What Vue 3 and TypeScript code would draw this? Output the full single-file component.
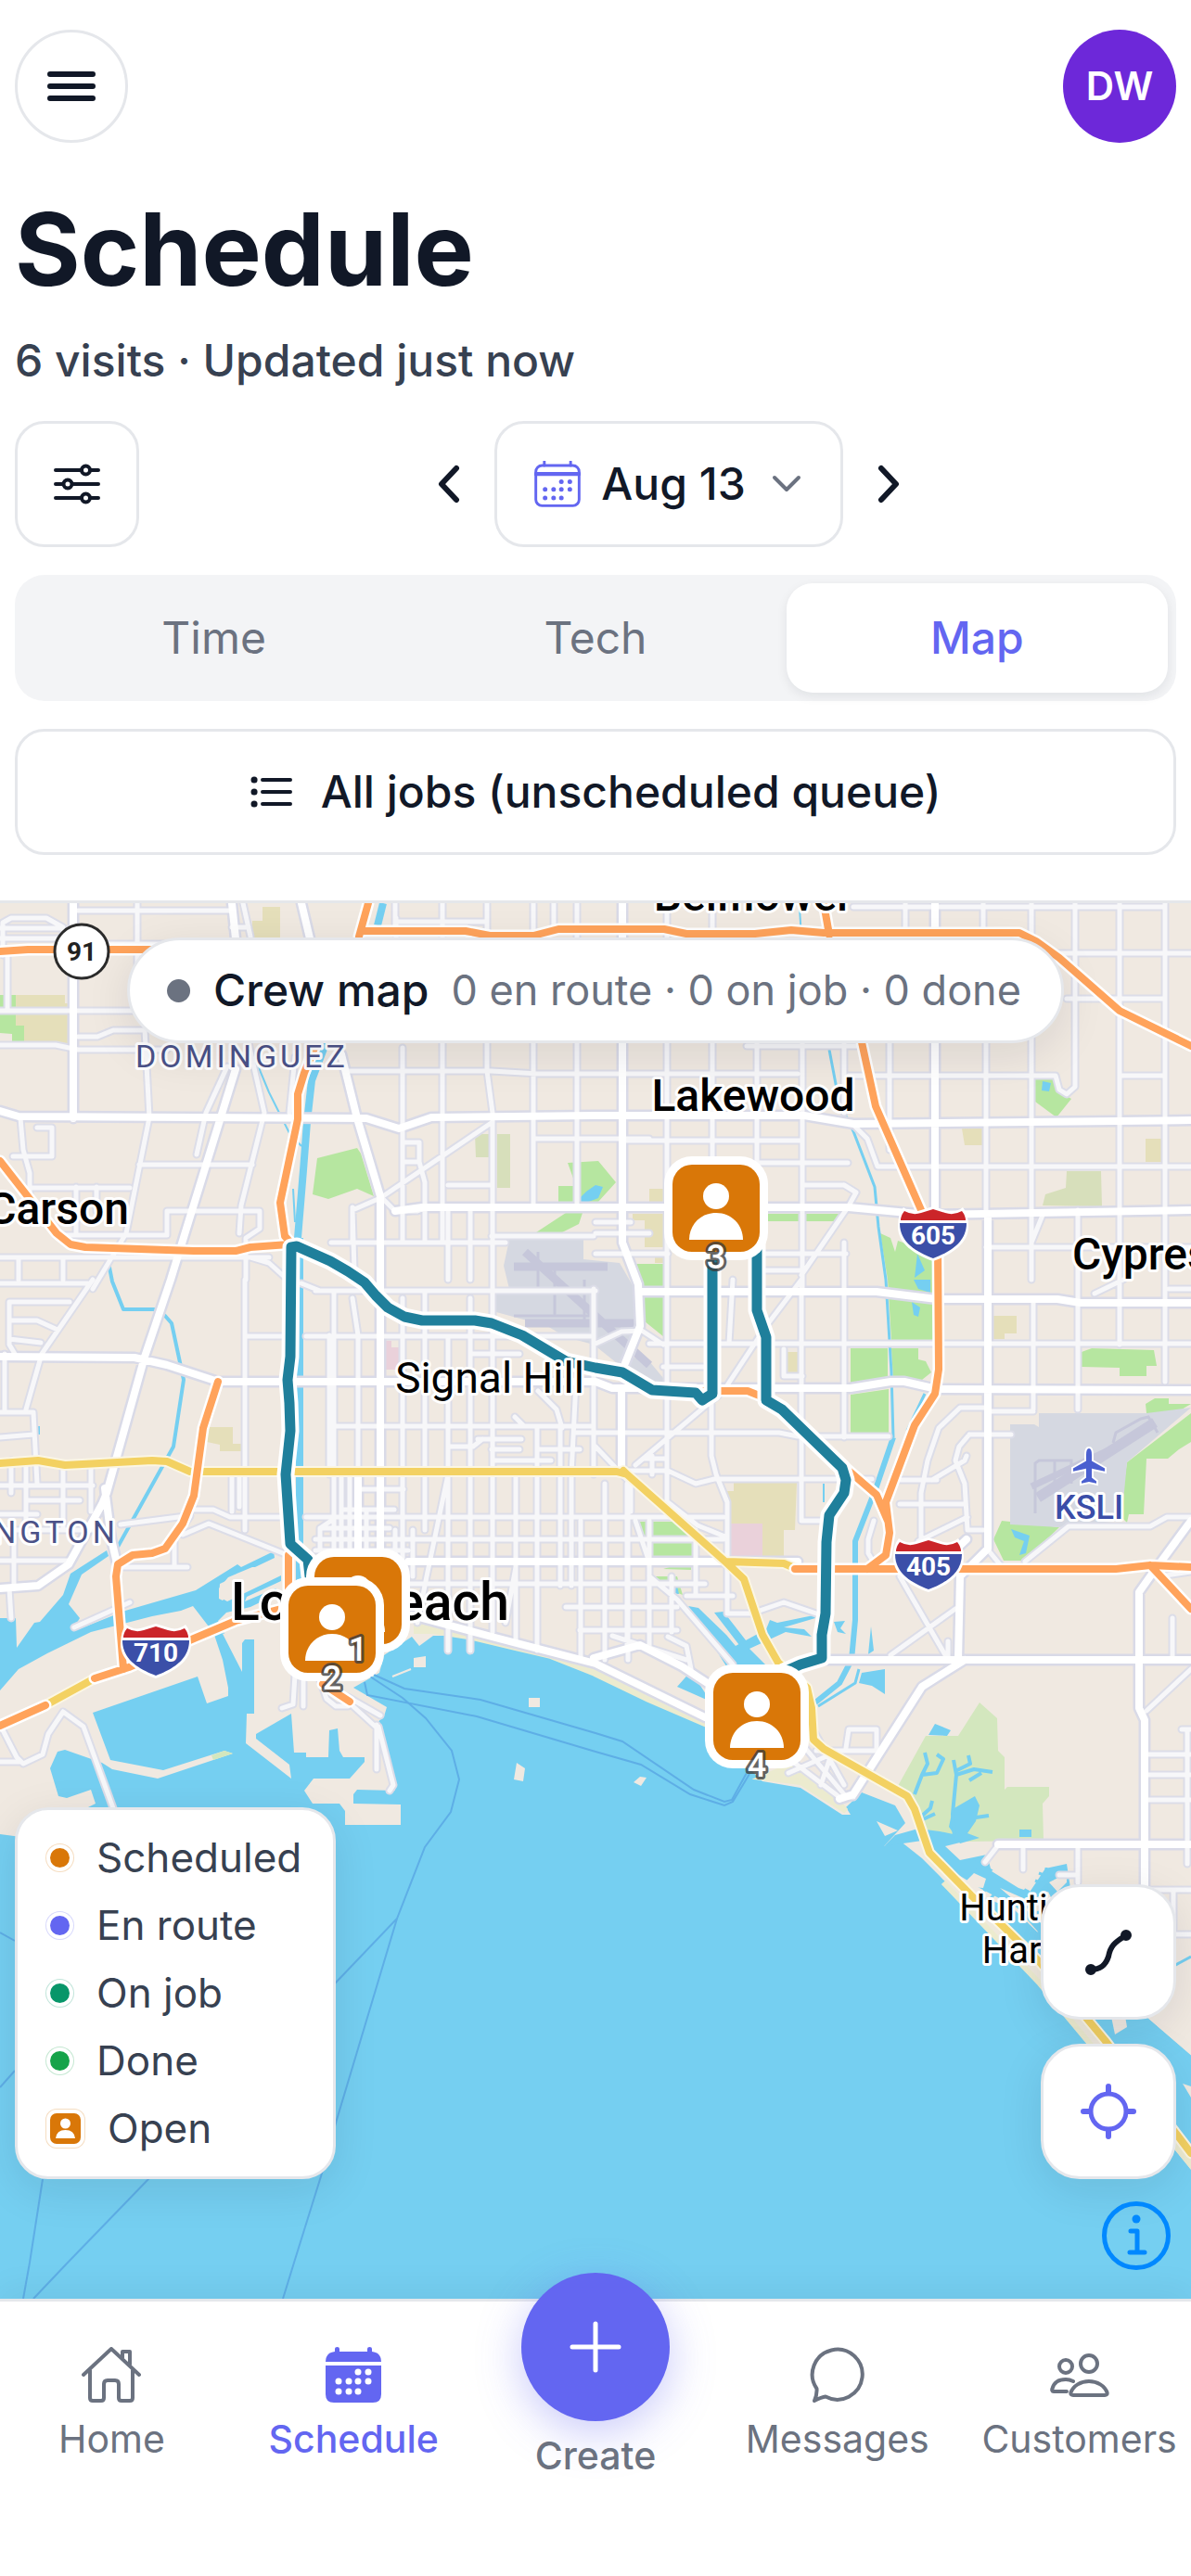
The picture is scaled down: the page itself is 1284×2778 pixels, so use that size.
<script setup lang="ts">
import { ref } from 'vue'

type View = 'Time' | 'Tech' | 'Map'
type Pair = [number, number]

const views: View[] = ['Time', 'Tech', 'Map']
const activeView = ref<View>('Map')

const legend = [
  { label: 'Scheduled', color: '#d97708' },
  { label: 'En route', color: '#6366f1' },
  { label: 'On job', color: '#079669' },
  { label: 'Done', color: '#16a34a' },
]

const calendarDots: Pair[] = [
  [35, 27], [46, 27],
  [14, 37], [25, 37], [35, 37], [46, 37],
  [14, 48], [25, 48], [35, 48],
]

// Stops are drawn in this order, so the later one lies on top.
const stops = [
  { n: 3, x: 772, y: 1303 },
  { n: 1, x: 386, y: 1726 },
  { n: 2, x: 358, y: 1757 },
  { n: 4, x: 816, y: 1851 },
]

const shields = [
  { n: '605', x: 1006, y: 1330 },
  { n: '405', x: 1001, y: 1687 },
  { n: '710', x: 168, y: 1780 },
]

const v = (x: number, a: number, b: number) => `M${x} ${a}V${b}`
const h = (y: number, a: number, b: number) => `M${a} ${y}H${b}`

const minorRoads: string = [
  // north-west
  h(1001, 0, 64), h(982, 84, 250), h(1012, 0, 78), h(1090, 0, 150), v(148, 974, 1060), h(1018, 84, 212),
  'M3 1030V995L12 990H50L68 1000V1015', h(1127, 0, 60), 'M60 1127L84 1132H180', 'M84 1118H105L122 1111H156',
  'M156 1110L161 1205L136 1330L100 1390', v(8, 1030, 1090), 'M262 974L270 1010', h(1000, 250, 268),
  'M245 1150L222 1200L212 1245', 'M268 1125L285 1200L260 1300L258 1330', 'M318 1140L312 1200', h(1256, 150, 272),
  'M22 1206L25 1240L32 1265V1310', 'M40 1216H56V1247H14', h(1281, 30, 140), h(1332, 60, 180), 'M180 1332V1306H280V1325L265 1335V1380',
  h(1356, 0, 290), v(20, 1356, 1380), v(68, 1356, 1380), 'M270 1356L290 1362L310 1380', v(82, 1280, 1330), v(104, 1280, 1306),
  // north centre
  h(994, 428, 525), v(427, 990, 1010), v(477, 974, 1340), v(525, 974, 1155), 'M525 1155L531 1200V1440', v(434, 1130, 1340), v(575, 974, 1303),
  v(597, 974, 1003), v(622, 974, 1303), 'M375 1155H530L580 1158H860', h(1228, 575, 700), 'M426 974V1003', 'M531 1210L410 1292L380 1305L382 1370',
  'M410 1290L426 1306H450L460 1302', 'M434 1232H452V1253H434', 'M452 1253L458 1275V1340', h(1278, 483, 530), h(1340, 357, 545), v(380, 1302, 1340),
  v(483, 1302, 1380), v(507, 1302, 1380), h(1333, 530, 640), v(458, 1302, 1340),
  // north-east
  h(978, 920, 1256), v(671, 974, 1000), v(719, 974, 1380), v(768, 974, 1258), v(816, 1100, 1380), v(865, 1100, 1395), v(910, 1120, 1200),
  v(910, 1340, 1550), v(959, 1125, 1240), v(976, 974, 1000), v(1060, 974, 1000), v(1063, 1125, 1305), v(1112, 974, 1380), v(1159, 974, 1170),
  'M1159 1160V1172L1150 1180L1142 1175L1138 1160H915', v(1207, 974, 1450), v(1256, 974, 1490), h(1028, 1142, 1284), h(1077, 1150, 1256),
  h(1160, 1207, 1256), h(1230, 675, 865), h(1254, 816, 914), h(1278, 865, 910), 'M910 1278L923 1286L914 1302L864 1375',
  'M920 1213L935 1228L946 1258H1284', h(1345, 1063, 1284), h(1352, 820, 912), v(1162, 1305, 1520), 'M1125 1308L1112 1340', h(1370, 820, 865),
  h(1128, 805, 930), h(1330, 642, 700), h(1318, 642, 680), h(1352, 642, 720),
  // mid west
  h(1384, 0, 95), 'M100 1380L45 1460L28 1520', h(1404, 10, 75), 'M10 1404V1450L16 1460', 'M10 1424H40L62 1434', 'M10 1444L44 1448',
  h(1523, 0, 36), 'M36 1523L40 1600', 'M0 1550L36 1547', v(5, 1460, 1520), h(1602, 0, 100), h(1618, 30, 86), h(1633, 0, 40), v(68, 1584, 1650),
  v(98, 1584, 1630), v(28, 1575, 1640), v(12, 1575, 1610), h(1683, 0, 74), v(15, 1650, 1713), 'M10 1713L12 1745', h(1650, 0, 100),
  v(264, 1380, 1650), 'M130 1644L200 1635L205 1628H230L248 1636H310', 'M197 1655L225 1643L305 1675', 'M205 1635L188 1660V1690H130', h(1690, 130, 202),
  h(1441, 264, 305), v(250, 1590, 1630), v(258, 1590, 1625), 'M80 1755L140 1728',
  // long beach grid
  h(1392, 340, 642), h(1441, 330, 640), h(1538, 355, 640), 'M325 1384L345 1392H400', 'M380 1400L386 1440V1540', v(355, 1440, 1590), v(360, 1392, 1690),
  v(386, 1538, 1700), v(434, 1400, 1680), v(458, 1392, 1650), v(483, 1441, 1780), v(507, 1400, 1780), v(531, 1392, 1760), v(556, 1590, 1770),
  v(579, 1538, 1780), v(604, 1538, 1710), 'M622 1470L616 1590V1710', h(1460, 507, 560), h(1552, 515, 562), h(1563, 530, 560), h(1575, 531, 594),
  h(1636, 330, 780), h(1660, 340, 780), h(1708, 430, 760), 'M483 1590L460 1700L450 1750', 'M556 1690L545 1750', h(1606, 386, 435), h(1628, 370, 425),
  'M483 1560H510L520 1552', 'M555 1528L565 1538H620', 'M580 1500L600 1520L606 1540', h(1545, 620, 660), h(1733, 610, 730), v(626, 1640, 1790),
  v(652, 1600, 1790), v(676, 1600, 1780), v(700, 1640, 1770), v(724, 1700, 1760), h(1758, 625, 730), h(1563, 580, 625), v(640, 1390, 1590),
  'M345 1670V1648L360 1638', v(368, 1590, 1680), v(377, 1590, 1680), v(395, 1630, 1690),
  h(1648, 345, 420), h(1672, 340, 440), v(426, 1650, 1700), v(445, 1650, 1700),
  // middle
  v(719, 1380, 1620), h(1393, 690, 950), h(1449, 700, 1284), 'M640 1450L670 1436L692 1435L715 1450', 'M790 1380L786 1449', 'M864 1380L826 1430L780 1500L685 1580',
  'M767 1500V1570L772 1590L784 1620V1740', h(1545, 642, 840), 'M840 1545L860 1549H958', v(864, 1380, 1640), 'M845 1455V1484H865', 'M676 1586H720L750 1600L770 1595H940',
  'M642 1560L680 1600V1630', v(677, 1610, 1790), 'M720 1620L752 1645L784 1658', 'M864 1640H885', h(1474, 715, 765), 'M685 1640L700 1685V1780', h(1721, 740, 790),
  v(750, 1650, 1720), 'M785 1740H810L845 1728L880 1740', 'M700 1700L730 1725L790 1795', 'M660 1764L740 1790', 'M720 1765L740 1775L745 1800', 'M694 1573H718', v(703, 1570, 1590),
  v(1114, 1400, 1520), h(1522, 1065, 1114), 'M1065 1518H1035L1012 1540L1000 1575L993 1610V1680', h(1547, 1045, 1090), 'M1045 1547L1034 1560L1030 1575L1040 1600L1043 1650H1060',
  h(1596, 970, 1010), 'M1005 1596L1040 1575L1042 1570', h(1622, 970, 1040), 'M1043 1636L990 1662', 'M942 1640L936 1660V1675L945 1690', 'M1064 1670L1082 1692',
  h(1390, 1260, 1284), 'M1211 1380L1180 1395', 'M970 1700L1022 1790', 'M1030 1735L960 1785', v(1022, 1770, 1790), 'M1105 1684L1152 1646H1240L1258 1636H1284',
  v(1264, 1745, 1790), 'M1250 1700L1284 1695',
  // south-east coast
  h(1892, 1234, 1284), h(1914, 1234, 1284), h(1941, 1234, 1284), h(2038, 1234, 1284), h(2086, 1234, 1284), v(1280, 1865, 2010), 'M1284 1800L1236 1845', h(1865, 1274, 1284),
  'M1076 1990L1062 2008', v(1103, 1990, 2016), 'M1162 1990V2030', h(2022, 1142, 1162), 'M912 1885L915 1865H945V1888', h(1888, 880, 945), 'M868 1850L910 1925',
  'M855 1900L905 1938H920', 'M868 1885L910 1935', 'M895 1895L885 1925', 'M850 1912L900 1890', v(1265, 2040, 2080),
  // harbour
  'M68 1846L52 1870L46 1892L25 1902L18 1895L0 1860', h(1900, 0, 22), 'M68 1846L90 1862L122 1950', 'M318 1806L316 1838L304 1842', v(327, 1806, 1840),
  'M345 1812L352 1832L362 1840H375', 'M375 1830L410 1850', 'M406 1860V1908', 'M408 1862L424 1925L420 1931', 'M345 1800L375 1835L408 1865',
].join('')

const majorRoads: string = [
  'M79 974V1206', 'M0 1198L20 1204L395 1206L430 1217L465 1205L640 1203H867L920 1212L1284 1208', 'M426 1306L455 1302H915L1000 1310L1284 1305',
  'M0 1463L145 1464L180 1472L235 1490H642L660 1497H917L960 1490H975L1010 1498L1284 1499', 'M690 1393H945L1010 1401H1140L1165 1405H1284',
  'M440 1684H780M642 1684H860', 'M368 1137L385 1206L410 1290V1680', 'M386 1590V1690', 'M254 1153L184 1380L156 1463L115 1610L110 1622L74 1687L41 1710L0 1713',
  'M113 1605L120 1660L127 1690', 'M250 974L254 1012M325 974L334 1012', 'M671 974V1340L688 1385L690 1430L674 1470', 'M670 1497V1584', 'M1008 974V1305',
  'M1065 1310V1670L1035 1700L1033 1790', 'M890 1790H1284', 'M1228 1800V1717L1240 1700L1284 1640', 'M1228 1790V1842L1234 1855V2040',
  'M1076 1989H1284', 'M1040 1790L994 1819L920 1935L905 1940', 'M640 1788L690 1774L735 1797L770 1820', 'M444 1742L530 1765L642 1794L760 1852', 'M1010 1690L1042 1660',
].join('')

const highways: string = [
  'M0 1026L30 1024H330', 'M397 974L387 1010', 'M390 1004H502L528 1009H575L602 1002H716L740 1007H814L853 1003L888 1006H1099L1117 1015L1142 1033L1207 1090L1284 1128',
  'M888 974L894 1008', 'M925 1100L929 1124L944 1193L994 1307L1011 1343L1012 1477L1008 1503L986 1537L955 1620L959 1653L955 1677L935 1692',
  'M0 1252L61 1330L76 1342L92 1345L209 1349H254L270 1345L311 1342', 'M342 1123L328 1157L321 1180V1207L302 1297L307 1333L315 1342',
  'M740 1500H806L826 1508L908 1580L945 1612L957 1640', 'M857 1692H957L1203 1692L1240 1688L1284 1690M1240 1688L1284 1735',
  'M235 1490L219 1540L209 1613L197 1643L178 1670L164 1675L143 1677L127 1687L125 1700L133 1800', 'M0 1861L49 1839M102 1810L139 1798L209 1767L254 1748L303 1735',
  'M311 1677V1735', 'M348 1816L377 1835',
].join('')

const arterials: string = [
  'M0 1578L41 1575L70 1580L164 1575L180 1576L205 1587H665L676 1590L783 1685L802 1703L822 1763L839 1793L870 1820L875 1842L877 1876L888 1886L978 1937L986 1951L1002 1998L1047 2044L1121 2116L1191 2200L1284 2322',
  'M672 1586L676 1590', 'M783 1684L845 1686L859 1692', 'M49 1839L102 1810',
].join('')

const route =
  'M334 1700L332 1682L313 1665L308 1590L313 1543L312 1513L310 1488L313 1463L314 1345L320 1344L356 1360L375 1371L393 1383L405 1397L418 1410L436 1420L455 1424H512L530 1427L563 1440L610 1468L642 1475L671 1480L703 1499L750 1502L757 1510L768 1503V1340M816 1340V1413L826 1442V1510L843 1520L908 1583L912 1596L910 1610L894 1634L891 1663L890 1740L886 1763V1788L863 1795L845 1803'

const mainland =
  'M-10 960H1294V2225L1238 2177L1170 2140L1125 2090L1094 2060L1047 2040L1017 2027L994 2004L970 1985L953 1991L976 1966L965 1947L929 1933L912 1949L917 1957H908L863 1928L822 1921L759 1859L695 1829L642 1804L594 1785L500 1764H467L452 1775L444 1765L414 1785L409 1804L381 1820L417 1841L414 1851L403 1861L426 1931L385 1930L381 1935V1945L432 1946V1968H372V1953L366 1945H337L328 1931L338 1918H377L393 1900V1895H370L366 1888L364 1864L355 1866L354 1895H330V1890H317L314 1848L276 1870V1875L312 1903L314 1918L265 1880L266 1848H274V1768H264L261 1772V1803L238 1758L230 1760L240 1790L246 1820V1829L223 1837L213 1808L100 1847L119 1898L176 1909L242 1888L251 1891L170 1918L121 1908L110 1901L70 1887L62 1889L54 1907L63 1937L72 1939L98 1930L103 1945L95 1949L90 1990L0 1978H-10Z'

const inlandWater = [
  'M0 1745H17L18 1777L37 1750L43 1749L68 1720L76 1697L115 1672L117 1678L88 1698L74 1730L86 1745L80 1755L85 1757L135 1737L211 1715L256 1687L260 1690L295 1673L296 1680L237 1708L236 1722L245 1727L303 1699V1705L266 1722L264 1727L297 1713L303 1717L270 1733L244 1739L235 1748L242 1762L228 1758L208 1732L195 1737L164 1743L98 1760L51 1783L20 1800L0 1823Z',
  'M742 1732L753 1734L783 1763L793 1775L826 1757L830 1747L838 1750L877 1742L879 1745L845 1755L867 1757L875 1765L847 1760L808 1778L830 1800H785Z',
  'M770 1739L780 1738L808 1774L800 1778Z', 'M730 1819L745 1802L766 1835Z', 'M929 1804L954 1800V1827L940 1818L926 1815Z',
  'M899 1749L911 1748L906 1756L912 1762L903 1760ZM939 1754L942 1780L936 1784Z',
  'M965 1979L990 1972L1013 1975L1023 1977L1051 1983L1019 1991L1035 2006L1064 2000L1068 2015L1109 2042L1127 2015L1150 2010L1154 2036L1125 2090L1096 2057L1056 2036L1035 2023L1002 2002L994 1985L953 1991Z',
  'M1001 1871L1008 1859L1025 1866L1021 1872ZM1099 1973H1112V1981H1099Z',
  'M1023 1970L1027 1951L1051 1937L1056 1947L1052 1964L1043 1977L1056 1982L1035 1988Z',
  'M1110 2085L1138 2080L1238 2177L1284 2217V2312L1273 2298L1200 2195L1166 2160Z',
  'M1090 1649L1110 1656L1106 1675L1099 1677L1104 1662L1094 1658Z', 'M705 1701L718 1710L727 1698L732 1719L720 1718Z',
  'M985 1380H1003V1394L990 1390ZM983 1404L992 1410L990 1420L985 1418Z', 'M622 1295L632 1285L642 1278L650 1280L645 1292L632 1297Z',
  'M1124 1166L1133 1168L1131 1177L1123 1176Z', 'M39 1538H43V1547H39ZM989 1352L997 1370L986 1378Z',
].join('')

const parks =
  'M0 1073H17V1106H26V1124H13V1115L0 1114ZM342 1249L385 1238L389 1244L403 1290L385 1282L354 1293L337 1288ZM612 1254L645 1252L664 1275L645 1296L602 1297V1279H621ZM578 1329L610 1308H628L624 1320L606 1329ZM682 1363H716V1442L695 1425V1395ZM828 1309H908V1317H828ZM1116 1164H1139L1144 1178L1155 1185L1139 1205L1116 1188ZM949 1330L960 1335L965 1350L968 1338L1007 1352L1006 1445H961L957 1380ZM961 1454H990V1466L998 1468L1004 1480L994 1488L963 1487ZM917 1454H957V1485L917 1492ZM917 1504L958 1498V1545H917ZM1166 1458L1177 1454L1244 1456L1247 1473H1236V1484H1207V1475L1166 1474ZM685 1641H740L746 1653V1678H701ZM705 1700H730L736 1720L715 1712ZM715 1692L745 1683V1693ZM1235 1514L1245 1508H1260V1514H1284L1262 1527L1236 1524ZM1284 1524V1555L1271 1563L1259 1573H1236L1233 1633H1217L1215 1642L1193 1620H1209L1215 1577ZM1071 1660L1080 1640L1142 1647L1105 1683H1082Z'
</script>

<template>
  <div class="page">
    <header class="topbar">
      <button class="round-button" type="button" aria-label="Menu">
        <svg width="52" height="34" viewBox="0 0 52 34" class="stroke" stroke-width="6">
          <path d="M3 4h46M3 17h46M3 30h46" />
        </svg>
      </button>
      <button class="avatar" type="button" aria-label="Account">DW</button>
    </header>

    <main class="main">
      <section class="controls">
        <h1>Schedule</h1>
        <p class="subtitle">6 visits · Updated just now</p>

        <div class="date-row">
          <button class="box-button filter" type="button" aria-label="Filters">
            <svg width="50" height="50" viewBox="0 0 50 50" class="stroke" stroke-width="4">
              <path d="M2 10h27.500M39.500 10H48M2 25h8M20 25h28M2 40h27.500M39.500 40H48" />
              <circle cx="34.500" cy="10" r="4.500" /><circle cx="15" cy="25" r="4.500" /><circle cx="34.500" cy="40" r="4.500" />
            </svg>
          </button>
          <div class="date-nav">
            <button class="plain-button" type="button" aria-label="Previous day">
              <svg width="24" height="42" viewBox="0 0 24 42" class="stroke" stroke-width="6"><path d="M20 4 4 21l16 17" /></svg>
            </button>
            <button class="box-button date" type="button">
              <svg class="accent" width="50" height="50" viewBox="0 0 60 60">
                <g class="stroke" stroke-width="3.500">
                  <rect x="2" y="6" width="56" height="52" rx="8" />
                  <path d="M2 17h56" stroke-width="5" /><path d="M13 1v5M47 1v5" />
                </g>
                <circle v-for="([x, y], i) in calendarDots" :key="i" :cx="x" :cy="y" r="3" fill="currentColor" />
              </svg>
              <span>Aug 13</span>
              <svg class="muted" width="32" height="20" viewBox="0 0 32 20" fill="none" stroke="currentColor" stroke-width="4" stroke-linecap="round" stroke-linejoin="round">
                <path d="m3 3 13 13L29 3" />
              </svg>
            </button>
            <button class="plain-button" type="button" aria-label="Next day">
              <svg width="24" height="42" viewBox="0 0 24 42" class="stroke" stroke-width="6"><path d="m4 4 16 17L4 38" /></svg>
            </button>
          </div>
        </div>

        <div class="segments" role="tablist">
          <button
            v-for="view in views"
            :key="view"
            type="button"
            role="tab"
            class="segment"
            :class="{ active: view === activeView }"
            :aria-selected="view === activeView"
            @click="activeView = view"
          >{{ view }}</button>
        </div>

        <button class="box-button all-jobs" type="button">
          <svg width="46" height="36" viewBox="0 0 46 36" class="stroke" stroke-width="4">
            <path d="M13 5h30M13 18h30M13 31h30" />
            <path d="M4 5h.1M4 18h.1M4 31h.1" stroke-width="7" />
          </svg>
          <span>All jobs (unscheduled queue)</span>
        </button>
      </section>

      <section class="map" aria-label="Crew map">
        <svg class="map-canvas" viewBox="0 974 1284 1505" preserveAspectRatio="xMidYMid slice">
          <rect x="-600" y="400" width="2600" height="2600" fill="#75cff1" />
          <path :d="mainland" fill="#f0e9e1" />
          <path d="M228 1893L242 1888L251 1891L230 1898Z" fill="#d3e7be" />
          <path d="M990 1995L1017 2027L1121 2137L1284 2340V2315L1190 2195L1121 2108L1047 2036Z" fill="#efe9dc" />
          <path d="M446 1756L467 1756L505 1762L594 1783L642 1802L700 1830L765 1858" fill="none" stroke="#ecebcf" stroke-width="12" />
          <path d="M822 1917L863 1922L912 1953L880 1920L850 1905Z" fill="#ecebcf" stroke="#ecebcf" stroke-width="6" />
          <path d="M1017 2030L1121 2139L1290 2342" fill="none" stroke="#ecebcf" stroke-width="6" />

          <g fill="#e5dfba">
            <path d="M17 1073H70V1082H73V1127L26 1124V1106H17ZM283 978H302V1011H272V993H283ZM700 1282H716V1296H700ZM682 1309H716V1345H695V1316H682ZM706 1356H716V1362H706ZM1037 1217H1060V1235H1040ZM1235 1228H1255V1253H1235ZM1071 1419H1096V1438H1083V1444H1071ZM847 1458H860V1480H847ZM225 1539H251V1557H260V1565H237V1558L223 1555ZM791 1599H859L857 1650H845V1679H822V1643H788L784 1608H791Z" />
          </g>
          <path d="M512 1223H527V1248H513ZM536 1223H550V1281H536ZM1150 1263H1187L1188 1301L1124 1300L1127 1288L1149 1281Z" fill="#d7dfbb" />
          <path d="M416 1446H422V1453H430V1477H416ZM788 1643H822V1679H788Z" fill="#ead1da" />
          <path :d="parks" fill="#b6e6a0" />
          <path d="M1056 1836L1075 1853L1076 1888L1083 1895V1930L1086 1927H1131V1937L1124 1945L1125 1985L1037 1986L990 1970L968 1926L998 1872H1033Z" fill="#d3e7be" />
          <path d="M549 1337H629V1358L668 1362L690 1400V1430L675 1462L700 1468L720 1492L690 1490L640 1450L610 1442L590 1430L535 1415V1393L549 1390L543 1365ZM1089 1536L1115 1536L1120 1539V1524H1236L1284 1518L1215 1577L1209 1640L1142 1647L1089 1644Z" fill="#d5d8e1" />
          <g fill="none" stroke="#c6c7da">
            <path d="M566 1350L700 1472M554 1366H655M566 1427H690" stroke-width="9" />
            <path d="M1119 1615L1245 1534" stroke-width="11" /><path d="M1112 1603L1208 1558" stroke-width="7" />
            <path d="M1116 1632V1578L1120 1575H1155V1600M1137 1575V1610M1200 1556L1203 1545L1230 1530L1238 1528L1248 1545M554 1419H640M598 1370V1420M630 1380V1425M580 1350V1390" stroke-width="3" />
          </g>

          <path :d="inlandWater" fill="#75cff1" />
          <g fill="none" stroke="#75cff1" stroke-linejoin="round">
            <path d="M413 974L407 998" stroke-width="8" />
            <path d="M352 1123L336 1165L331 1210L327 1262L321 1335M323 1335V1710" stroke-width="8" />
            <path d="M117 1362L121 1382L133 1412H166L178 1419L185 1427L198 1488L187 1560L127 1668" stroke-width="4" />
            <path d="M0 1250L50 1318L78 1337M268 1125L290 1178L312 1222L325 1236M862 980L864 1010M888 1600V1620M316 1282L318 1318" stroke-width="2" />
            <path d="M894 1132L905 1190L920 1220L943 1280L947 1323L955 1380L961 1480L963 1550" stroke-width="3" />
            <path d="M963 1550L945 1603L922 1662V1747L918 1790L905 1815L879 1836" stroke-width="6" />
            <path d="M997 1503L978 1543M926 1800L922 1815L882 1840" stroke-width="3" />
            <path d="M1029 1981L1027 1956L1031 1914L1028 1898M1030 1910L1046 1902L1044 1893M1031 1914L1050 1908L1070 1911M986 1935L994 1914L1000 1902L997 1890M994 1914L1010 1912L1017 1897L1010 1892M992 1960L1003 1950L1005 1942M995 1962L1008 1956M1052 1960L1066 1958M1045 1920L1058 1912" stroke-width="4" />
            <path d="M1047 2008L1078 2025L1109 2042" stroke-width="6" />
            <path d="M1284 2110L1262 2122" stroke-width="3" />
          </g>
          <g fill="#f0e9e1">
            <path d="M1069 2018L1082 2005L1100 2006L1112 2008L1126 2010L1108 2032L1104 2038L1098 2036ZM1036 2034L1050 2020L1063 2026L1060 2036ZM1078 2036L1110 2050L1130 2040L1140 2060L1125 2075L1100 2055ZM1131 2030L1150 2020V2030L1140 2040Z" />
            <path d="M570 1831H582V1841H570ZM557 1901L566 1907L564 1921L554 1919ZM683 1922L690 1916L697 1917L691 1926ZM446 1788L459 1786V1798H446Z" />
            <path d="M945 1964L968 1974L954 1980ZM1197 2170L1212 2168L1215 2186L1202 2194ZM1275 2247L1284 2250V2262Z" />
            <path d="M236 1713L246 1701L272 1690L284 1690L262 1704L240 1726L236 1724Z" />
          </g>
          <path d="M423 1808L443 1800" stroke="#f0e9e1" stroke-width="2" />
          <path d="M1100 2060L1116 2053M1103 2068L1120 2062M1128 2014V2030M1120 2020L1136 2026M1116 2028L1130 2034M1066 2032L1058 2044M1074 2040L1066 2050" stroke="#75cff1" stroke-width="3" fill="none" />

          <g fill="none" stroke="#5eaee6" stroke-width="2">
            <path d="M399 1808L434 1831L459 1853L487 1888L495 1919L486 1954L458 1992L428 2069L363 2137L160 2350L73 2440L36 2479M428 2069L363 2286L346 2347L317 2440L305 2479M46 2350L32 2440L25 2479M0 2084L16 2093M0 2251L16 2233" />
            <path d="M403 1806L436 1821L518 1833L642 1869L671 1878L748 1930L781 1943L789 1941L806 1910M393 1814L396 1828L514 1851L642 1889L691 1903L744 1935L781 1947L790 1943L808 1913" />
          </g>

          <g fill="none" stroke-linecap="round" stroke-linejoin="round">
            <path :d="minorRoads" stroke="#dcdde8" stroke-width="9" />
            <path :d="majorRoads" stroke="#d9dae7" stroke-width="13" />
            <path :d="minorRoads" stroke="#f7f7f9" stroke-width="5" />
            <path :d="majorRoads" stroke="#fff" stroke-width="8" />
            <path :d="arterials" stroke="#fbf6e4" stroke-width="12" />
            <path :d="arterials" stroke="#f3d162" stroke-width="8" />
            <path :d="highways" stroke="#fff" stroke-width="13" />
            <path :d="highways" stroke="#ffa35b" stroke-width="8" />
            <path :d="route" stroke="#fff" stroke-width="19" />
            <path :d="route" stroke="#1f7f9b" stroke-width="11" />
          </g>

          <g class="place">
            <text x="812" y="982" text-anchor="middle">Bellflower</text>
            <text x="812" y="1198" text-anchor="middle">Lakewood</text>
            <text x="139" y="1320" text-anchor="end">Carson</text>
            <text x="1156" y="1369">Cypress</text>
            <text class="city" x="399" y="1747" text-anchor="middle">Long Beach</text>
            <text class="town" x="528" y="1502" text-anchor="middle">Signal Hill</text>
            <text class="area" x="1133" y="2071" text-anchor="middle">Huntington</text>
            <text class="area" x="1131" y="2117" text-anchor="middle">Harbour</text>
            <text class="district" x="146" y="1151">DOMINGUEZ</text>
            <text class="district" x="128" y="1664" text-anchor="end">WILMINGTON</text>
            <text class="airport" x="1174" y="1638" text-anchor="middle">KSLI</text>
          </g>
          <path d="M1174 1561c3 0 4 4 4 8v6l14 8v5l-14-3v8l5 4v4l-9-2-9 2v-4l5-4v-8l-14 3v-5l14-8v-6c0-4 1-8 4-8z" fill="#4a5fd0" stroke="#fff" stroke-width="2" />

          <circle cx="88" cy="1026" r="29" fill="#fff" stroke="#2b2b2b" stroke-width="3" />
          <text class="shield-text dark" x="88" y="1036" text-anchor="middle">91</text>
          <g v-for="s in shields" :key="s.n" :transform="`translate(${s.x} ${s.y})`">
            <path d="M-32-28q9 7 19 3L0-29l13 4q10 4 19-3 6 7 6 21C38 11 20 23 0 30-20 23-38 11-38-7q0-14 6-21z" fill="#fff" />
            <path d="M-31-24q9 5 18 2L0-26l13 4q9 3 18-2 4 5 4 10h-70q0-5 4-10z" fill="#cb2529" />
            <path d="M-36-11h72C36 10 18 20 0 27-18 20-36 10-36-11z" fill="#3b4fa8" />
            <text class="shield-text" y="12" text-anchor="middle">{{ s.n }}</text>
          </g>

          <g v-for="s in stops" :key="s.n" :transform="`translate(${s.x} ${s.y})`">
            <rect x="-56" y="-56" width="112" height="112" rx="30" fill="#fff" />
            <rect x="-47" y="-47" width="94" height="94" rx="21" fill="#d97708" />
            <circle cy="-13" r="14" fill="#fff" />
            <path d="M-29 34C-29 18-17 5 0 5s29 13 29 29z" fill="#fff" />
          </g>
          <text v-for="s in stops" :key="s.n" class="stop-text" :x="s.x" :y="s.y + 65" text-anchor="middle">{{ s.n }}</text>
        </svg>

        <div class="status">
          <span class="status-dot"></span>
          <strong>Crew map</strong>
          <span class="status-counts">0 en route · 0 on job · 0 done</span>
        </div>

        <ul class="legend">
          <li v-for="item in legend" :key="item.label">
            <span class="legend-dot" :style="{ color: item.color }"></span>{{ item.label }}
          </li>
          <li>
            <span class="legend-open">
              <svg width="33" height="33" viewBox="0 0 33 33" fill="#fff"><circle cx="16.500" cy="11" r="5.500" /><path d="M6 27q1-9 10.500-9T27 27z" /></svg>
            </span>Open
          </li>
        </ul>

        <div class="tools">
          <button class="tool" type="button" aria-label="Show route">
            <svg width="52" height="52" viewBox="0 0 52 52" class="stroke" stroke-width="6">
              <path d="M7 45c11 0 16-5 19-14C28 20 32 16 45 8" />
              <circle cx="7" cy="45" r="3" fill="currentColor" /><circle cx="45" cy="8" r="3" fill="currentColor" />
            </svg>
          </button>
          <button class="tool accent" type="button" aria-label="Centre on my location">
            <svg width="60" height="60" viewBox="0 0 60 60" class="stroke" stroke-width="5">
              <circle cx="30" cy="30" r="19" /><path d="M30 3v6M30 51v6M3 30h6M51 30h6" stroke-width="6" />
            </svg>
          </button>
        </div>

        <button class="info" type="button" aria-label="Map information">
          <svg width="76" height="76" viewBox="0 0 76 76" class="stroke" stroke-width="5">
            <circle cx="38" cy="38" r="34.500" /><path d="M32 33h7v23M31 56h16" />
            <circle cx="38" cy="20" r="4.500" fill="currentColor" stroke="none" />
          </svg>
        </button>
      </section>
    </main>

    <nav class="tabbar">
      <a href="#home">
        <svg width="64" height="60" viewBox="0 0 64 60" class="stroke" stroke-width="4">
          <path d="M2 30 32 2l30 28M9 25v30q0 3 3 3h9q3 0 3-3V40q0-4 4-4h8q4 0 4 4v15q0 3 3 3h9q3 0 3-3V25M44 12V5h8v14" />
        </svg>
        <span>Home</span>
      </a>
      <a href="#schedule" class="current" aria-current="page">
        <svg width="60" height="60" viewBox="0 0 60 60">
          <path d="M10 5V2q0-2 2.500-2T15 2v3h30V2q0-2 2.500-2T50 2v3q10 1 10 11H0Q0 6 10 5zM0 20h60v31q0 9-9 9H9q-9 0-9-9z" fill="currentColor" />
          <circle v-for="([x, y], i) in calendarDots" :key="i" :cx="x" :cy="y" r="3.500" fill="#fff" />
        </svg>
        <span>Schedule</span>
      </a>
      <a href="#create" class="create">
        <span class="create-circle">
          <svg width="56" height="56" viewBox="0 0 56 56" class="stroke" stroke-width="5"><path d="M28 3v50M3 28h50" /></svg>
        </span>
        <span>Create</span>
      </a>
      <a href="#messages">
        <svg width="60" height="60" viewBox="0 0 60 60" class="stroke" stroke-width="4">
          <path d="M5 58q3-7 2.500-13A27 27 0 1 1 17 53.500Q13 54 5 58z" />
        </svg>
        <span>Messages</span>
      </a>
      <a href="#customers">
        <svg width="64" height="60" viewBox="0 0 64 60" class="stroke" stroke-width="4">
          <circle cx="42" cy="18" r="9" /><circle cx="17" cy="21" r="7" />
          <path d="M25 52h34c2 0 3-1 2.500-3C59 42 51 37 42 37s-17 5-19.500 12c-.5 2 .5 3 2.500 3zM18 48H4c-2 0-2-2-1.500-3C4 39 9 35 17 35c3 0 6 1 8 2" />
        </svg>
        <span>Customers</span>
      </a>
    </nav>
  </div>
</template>

<style>
body {
  margin: 0;
  background: #fff;
}
</style>

<style scoped>
.page {
  display: flex;
  flex-direction: column;
  min-height: 100vh;
  font-family: Inter, "Liberation Sans", sans-serif;
  font-size: 48px;
  line-height: 60px;
  color: #111827;
  background: #fff;
}
.page *,
.page {
  box-sizing: border-box;
}
svg {
  display: block;
  flex: none;
}
button {
  padding: 0;
  border: 0;
  background: none;
  color: inherit;
  font: inherit;
  cursor: pointer;
}
.stroke {
  fill: none;
  stroke: currentColor;
  stroke-linecap: round;
  stroke-linejoin: round;
}
.accent {
  color: #6366f1;
}
.muted {
  color: #6b7280;
}
.topbar {
  display: flex;
  justify-content: space-between;
  padding: 32px 16px 0;
}
.round-button,
.avatar {
  display: flex;
  align-items: center;
  justify-content: center;
  width: 122px;
  height: 122px;
  border-radius: 50%;
}
.round-button {
  border: 3px solid #e5e7eb;
}
.avatar {
  background: #6d28d9;
  color: #fff;
  font-size: 42px;
  font-weight: 600;
}
.main {
  display: flex;
  flex: 1;
  flex-direction: column;
}
.controls {
  display: flex;
  flex-direction: column;
  gap: 30px;
  padding: 55px 16px 49px;
}
h1 {
  margin: 0;
  font-size: 108px;
  font-weight: 700;
  line-height: 120px;
}
.subtitle {
  margin: 0 0 5px;
  color: #374151;
  font-weight: 450;
}
.box-button {
  display: flex;
  align-items: center;
  justify-content: center;
  height: 136px;
  border: 3px solid #e5e7eb;
  border-radius: 32px;
  background: #fff;
  font-weight: 500;
}
.date-row {
  display: flex;
  gap: 24px;
}
.filter {
  width: 134px;
}
.date-nav {
  display: flex;
  flex: 1;
  align-items: center;
  justify-content: center;
  gap: 37px;
}
.date {
  gap: 22px;
  padding: 0 42px 0 40px;
}
.date .muted {
  margin-left: 6px;
}
.segments {
  display: flex;
  height: 136px;
  padding: 9px;
  border-radius: 32px;
  background: #f3f4f6;
}
.segment {
  flex: 1;
  border-radius: 28px;
  color: #6b7280;
}
.segment.active {
  background: #fff;
  color: #6366f1;
  font-weight: 500;
  box-shadow: 0 4px 12px rgba(17, 24, 39, 0.08);
}
.all-jobs {
  gap: 30px;
}
.map {
  position: relative;
  flex: 1;
  min-height: 900px;
  overflow: hidden;
  border-top: 3px solid #e5e7eb;
}
.map-canvas {
  position: absolute;
  inset: 0;
  width: 100%;
  height: 100%;
}
.place {
  font-family: Roboto, "Liberation Sans", sans-serif;
  font-size: 48px;
  font-weight: 500;
  fill: #000;
  stroke: #fff;
  stroke-width: 6px;
  stroke-linejoin: round;
  paint-order: stroke;
}
.city {
  font-size: 57px;
}
.town {
  font-size: 46px;
  font-weight: 400;
}
.area {
  font-size: 40px;
  font-weight: 400;
}
.district {
  font-size: 34px;
  font-weight: 400;
  letter-spacing: 4px;
  fill: #4b5288;
}
.airport {
  font-size: 36px;
  fill: #3a4da8;
}
.shield-text {
  font-family: Roboto, "Liberation Sans", sans-serif;
  font-size: 28px;
  font-weight: 700;
  fill: #fff;
}
.shield-text.dark {
  fill: #222;
}
.stop-text {
  font-family: Roboto, "Liberation Sans", sans-serif;
  font-size: 36px;
  font-weight: 500;
  fill: #fff;
  stroke: rgba(60, 60, 60, 0.8);
  stroke-width: 6px;
  stroke-linejoin: round;
  paint-order: stroke;
}
.status {
  position: absolute;
  top: 37px;
  left: 50%;
  display: flex;
  align-items: center;
  height: 114px;
  padding: 0 43px 0 40px;
  border: 3px solid #e5e7eb;
  border-radius: 57px;
  background: #fff;
  white-space: nowrap;
  transform: translateX(-50%);
  box-shadow: 0 12px 48px rgba(17, 24, 39, 0.1);
}
.status-dot {
  width: 25px;
  height: 25px;
  margin-right: 25px;
  border-radius: 50%;
  background: #6b7280;
}
.status strong {
  margin-right: 24px;
  font-weight: 500;
}
.status-counts {
  font-size: 45px;
  color: #6b7280;
}
.legend {
  position: absolute;
  bottom: 129px;
  left: 16px;
  display: flex;
  flex-direction: column;
  gap: 18px;
  margin: 0;
  padding: 24px 34px 24px 35px;
  border: 3px solid #e5e7eb;
  border-radius: 36px;
  background: #fff;
  color: #374151;
  font-size: 44px;
  line-height: 55px;
  list-style: none;
  box-shadow: 0 12px 48px rgba(17, 24, 39, 0.1);
}
.legend li {
  display: flex;
  align-items: center;
  gap: 29px;
}
.legend-dot {
  width: 21px;
  height: 21px;
  border-radius: 50%;
  background: currentColor;
  box-shadow: 0 0 0 4px #fff, 0 0 0 5px color-mix(in srgb, currentColor 25%, #fff);
}
.legend-open {
  width: 33px;
  height: 33px;
  border-radius: 7px;
  background: #d97708;
  box-shadow: 0 0 0 4px #fff, 0 0 0 5px #f5ddc1;
}
.tools {
  position: absolute;
  right: 16px;
  bottom: 129px;
  display: flex;
  flex-direction: column;
  gap: 26px;
}
.tool {
  display: flex;
  align-items: center;
  justify-content: center;
  width: 146px;
  height: 146px;
  border: 3px solid #e5e7eb;
  border-radius: 42px;
  background: #fff;
  box-shadow: 0 12px 48px rgba(17, 24, 39, 0.1);
}
.info {
  position: absolute;
  right: 21px;
  bottom: 30px;
  color: #0088ff;
}
.tabbar {
  position: relative;
  display: grid;
  grid-template-columns: repeat(5, minmax(0, 1fr));
  gap: 20px;
  padding: 49px 0 122px;
  border-top: 3px solid #e5e7eb;
  background: #fff;
  box-shadow: 0 -8px 36px rgba(17, 24, 39, 0.06);
}
.tabbar a {
  display: flex;
  flex-direction: column;
  align-items: center;
  gap: 13px;
  color: #6b7280;
  font-size: 41px;
  line-height: 52px;
  text-decoration: none;
}
.tabbar .current {
  color: #6366f1;
  font-weight: 500;
}
.tabbar .create {
  gap: 11px;
  margin: -80px 0 -20px;
  font-weight: 500;
}
.create-circle {
  display: flex;
  align-items: center;
  justify-content: center;
  width: 160px;
  height: 160px;
  border-radius: 50%;
  background: #6366f1;
  color: #fff;
  box-shadow: 0 12px 48px rgba(99, 102, 241, 0.35);
}
</style>
